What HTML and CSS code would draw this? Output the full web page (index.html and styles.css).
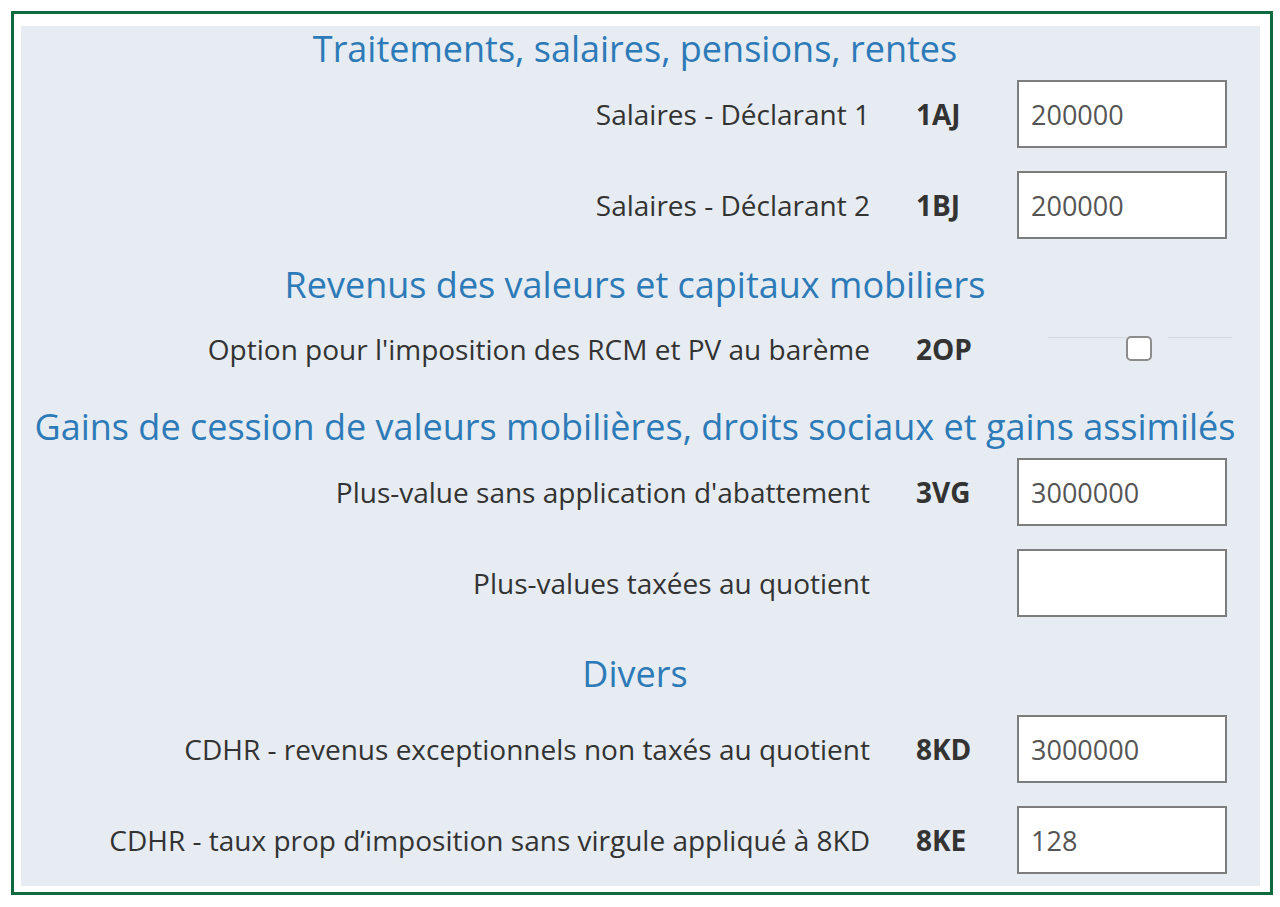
FILE: index.html
```html
<!DOCTYPE html>
<html lang="fr">
<head>
<meta charset="utf-8">
<title>Déclaration des revenus</title>
<link rel="stylesheet" href="styles.css">
</head>
<body>
  <div class="frame">
    <form class="panel">

      <h3 class="heading">Traitements, salaires, pensions, rentes</h3>
      <div class="row">
        <label class="label" for="f1aj">Salaires - Déclarant 1</label>
        <span class="code">1AJ</span>
        <input class="field" id="f1aj" type="text" value="200000">
      </div>
      <div class="row">
        <label class="label" for="f1bj">Salaires - Déclarant 2</label>
        <span class="code">1BJ</span>
        <input class="field" id="f1bj" type="text" value="200000">
      </div>

      <h3 class="heading">Revenus des valeurs et capitaux mobiliers</h3>
      <div class="row row-check">
        <label class="label" for="f2op">Option pour l'imposition des RCM et PV au barème</label>
        <span class="code">2OP</span>
        <div class="check-wrap">
          <span class="check-line"></span>
          <input class="check" id="f2op" type="checkbox">
          <span class="check-gap"></span>
          <span class="check-line check-line-right"></span>
        </div>
      </div>

      <h3 class="heading">Gains de cession de valeurs mobilières, droits sociaux et gains assimilés</h3>
      <div class="row">
        <label class="label" for="f3vg">Plus-value sans application d'abattement</label>
        <span class="code">3VG</span>
        <input class="field" id="f3vg" type="text" value="3000000">
      </div>
      <div class="row">
        <label class="label" for="fquot">Plus-values taxées au quotient</label>
        <span class="code"></span>
        <input class="field" id="fquot" type="text" value="">
      </div>

      <h3 class="heading heading-divers">Divers</h3>
      <div class="row">
        <label class="label" for="f8kd">CDHR - revenus exceptionnels non taxés au quotient</label>
        <span class="code">8KD</span>
        <input class="field" id="f8kd" type="text" value="3000000">
      </div>
      <div class="row">
        <label class="label" for="f8ke">CDHR - taux prop d’imposition sans virgule appliqué à 8KD</label>
        <span class="code">8KE</span>
        <input class="field" id="f8ke" type="text" value="128">
      </div>

    </form>
  </div>
</body>
</html>
```

FILE: styles.css
```css
body {
  margin: 0;
  background: #ffffff;
  font-family: "Open Sans", "DejaVu Sans", sans-serif;
  color: #333333;
}

.frame {
  margin: 11px 7px 0 11px;
  height: 884px;
  box-sizing: border-box;
  border: 3px solid #0f6b3f;
  padding: 12px 10px 6px 7px;
  background: #ffffff;
}

.panel {
  display: flex;
  flex-direction: column;
  height: 860px;
  box-sizing: border-box;
  background: #e6ecf2;
  padding: 0 0 12px 0;
  margin: 0;
}

  .heading {
    margin: 0 0 8px;
    height: 46px;
    line-height: 46px;
    font-size: 36px;
    font-weight: normal;
    color: #2d7ab8;
    text-align: center;
    white-space: nowrap;
    padding-right: 11px;
  }

  .heading-divers {
    margin-top: 11px;
    margin-bottom: 18px;
  }

  .row {
    display: grid;
    grid-template-columns: 1fr 101px 210px;
    align-items: center;
    height: 68px;
    margin-bottom: 23px;
    padding-right: 33px;
  }

  .row:last-child {
    margin-bottom: 0;
  }

  .row-check {
    height: 66px;
  }

  .label {
    text-align: right;
    font-size: 28px;
    white-space: nowrap;
    padding-right: 46px;
  }

  .code {
    font-size: 28px;
    font-weight: bold;
    color: #333333;
  }

  .field {
    box-sizing: border-box;
    width: 210px;
    height: 68px;
    margin: 0;
    border: 2px solid #7d7d7d;
    background: #ffffff;
    padding: 0 12px;
    font: 27px "Open Sans", "DejaVu Sans", sans-serif;
    color: #555555;
  }

/* 2OP checkbox sits on a thin rule */
.check-wrap {
  display: flex;
  align-items: flex-start;
  margin: 0 -5px 0 31px;
  height: 26px;
}

.check-line {
  flex: 1;
  border-top: 1px solid #d3d9df;
  margin-top: 1px;
}

.check-line-right {
  flex: 0 0 64px;
}

.check-gap {
  width: 16px;
}

.check {
  appearance: none;
  -webkit-appearance: none;
  width: 26px;
  height: 25px;
  margin: 0;
  box-sizing: border-box;
  border: 2px solid #8c8c8c;
  border-radius: 5px;
  background: #ffffff;
}
```
